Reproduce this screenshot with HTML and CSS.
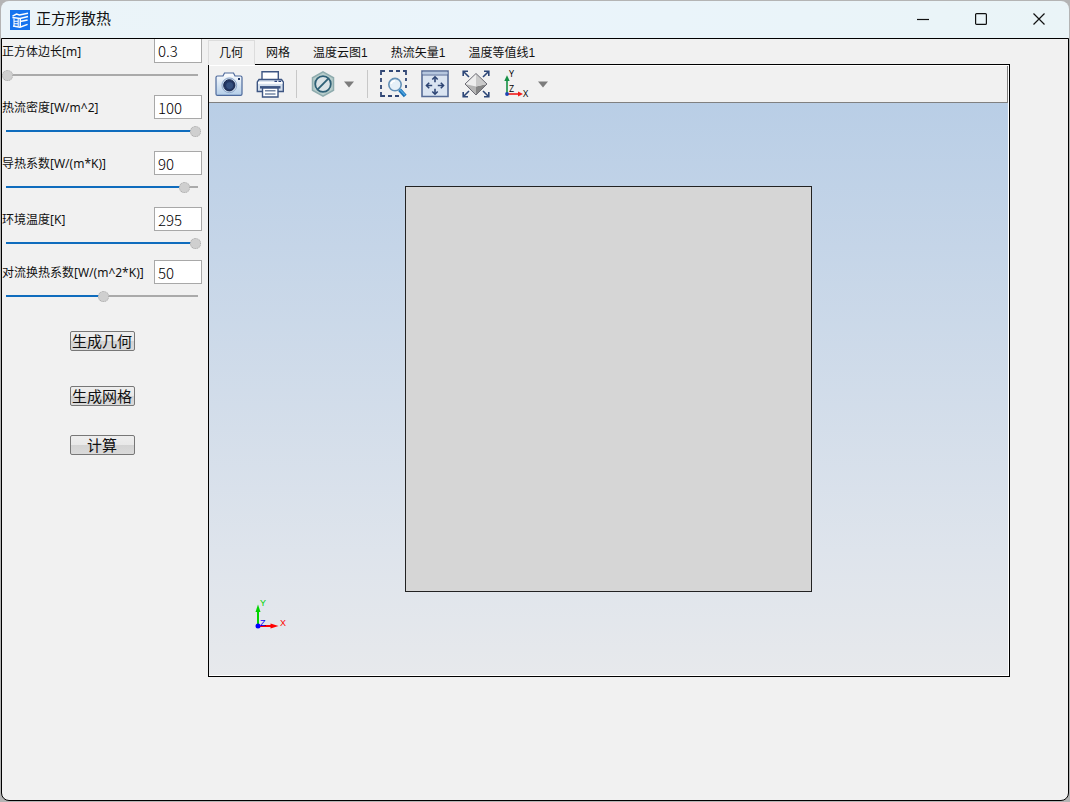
FILE: index.html
```html
<!DOCTYPE html>
<html lang="zh-CN">
<head>
<meta charset="utf-8">
<title>正方形散热</title>
<link rel="stylesheet" href="styles.css">
</head>
<body>
<div class="window">
  <header class="titlebar">
    <svg class="app-icon" viewBox="0 0 20 20" aria-hidden="true">
      <rect width="20" height="20" fill="#1673ee"/>
      <g fill="none" stroke="#fff" stroke-width="1.5">
        <path d="M2.5 6.2L6.5 4L9.5 5L18 3.2"/>
        <path d="M2.4 7.6L10 8.4L18 6.6"/>
        <path d="M10 11.6L17.6 10"/>
        <path d="M3 16L10 17.2L17.6 14.4"/>
        <path d="M4 8.5V16M8.2 8.5V16.6" stroke-width="1.1"/>
        <path d="M4 11.2H8M4 13.8H8" stroke-width="1.1"/>
      </g>
      <path d="M9.6 8.4H11V17L9.6 17.2Z" fill="#fff"/>
    </svg>
    <h1 class="title">正方形散热</h1>
    <div class="window-controls">
      <button class="window-button" type="button" aria-label="最小化"><svg viewBox="0 0 12 12"><path d="M0 6.5H12"/></svg></button>
      <button class="window-button" type="button" aria-label="最大化"><svg viewBox="0 0 12 12"><rect x=".6" y=".6" width="10.8" height="10.8" rx="1"/></svg></button>
      <button class="window-button" type="button" aria-label="关闭"><svg viewBox="0 0 12 12"><path d="M.5 .5L11.5 11.5M11.5 .5L.5 11.5"/></svg></button>
    </div>
  </header>

  <div class="content">
    <form class="sidebar">
      <div class="field field-first">
        <label class="field-label" for="side">正方体边长[m]</label>
        <input class="field-input" id="side" type="text" value="0.3">
        <input class="slider" type="range" aria-label="正方体边长" value="0" style="--fill:0%">
      </div>
      <div class="field">
        <label class="field-label" for="flux">热流密度[W/m^2]</label>
        <input class="field-input" id="flux" type="text" value="100">
        <input class="slider" type="range" aria-label="热流密度" value="100" style="--fill:100%">
      </div>
      <div class="field">
        <label class="field-label" for="conduct">导热系数[W/(m*K)]</label>
        <input class="field-input" id="conduct" type="text" value="90">
        <input class="slider" type="range" aria-label="导热系数" value="94" style="--fill:94%">
      </div>
      <div class="field field-compact">
        <label class="field-label" for="ambient">环境温度[K]</label>
        <input class="field-input" id="ambient" type="text" value="295">
        <input class="slider" type="range" aria-label="环境温度" value="100" style="--fill:100%">
      </div>
      <div class="field">
        <label class="field-label" for="convect">对流换热系数[W/(m^2*K)]</label>
        <input class="field-input" id="convect" type="text" value="50">
        <input class="slider" type="range" aria-label="对流换热系数" value="51" style="--fill:51%">
      </div>
      <div class="actions">
        <button class="action" type="button">生成几何</button>
        <button class="action action-mesh" type="button">生成网格</button>
        <button class="action" type="button">计算</button>
      </div>
    </form>

    <main class="viewer">
      <div class="tabs" role="tablist">
        <button class="tab tab-active" type="button" role="tab" aria-selected="true">几何</button>
        <button class="tab" type="button" role="tab">网格</button>
        <button class="tab" type="button" role="tab">温度云图1</button>
        <button class="tab" type="button" role="tab">热流矢量1</button>
        <button class="tab" type="button" role="tab">温度等值线1</button>
        <span class="tab-rest"></span>
      </div>
      <section class="panel">
        <div class="toolbar">
          <button class="tool" type="button" aria-label="截图">
            <svg viewBox="0 0 28 28">
              <defs><linearGradient id="cam" x2="0" y2="1"><stop stop-color="#fff"/><stop offset="1" stop-color="#b3cde8"/></linearGradient></defs>
              <path d="M1 7.5Q1 6 2.5 6H8L9.5 3H18.5L20 6H25.5Q27 6 27 7.5V24Q27 25.3 25.5 25.3H2.5Q1 25.3 1 24Z" fill="url(#cam)" stroke="#4e6a9c" stroke-width="1.2"/>
              <circle cx="14.3" cy="15.3" r="7.4" fill="#c8d8ea" stroke="#8fa8cb"/>
              <circle cx="14.3" cy="15.3" r="5.6" fill="#243763" stroke="#17264c"/>
              <circle cx="14.6" cy="15.6" r="3.4" fill="#35507f"/>
              <path d="M23 9H25" stroke="#223967" stroke-width="2"/>
            </svg>
          </button>
          <button class="tool" type="button" aria-label="打印">
            <svg viewBox="0 0 28 28" stroke="#3e5683" stroke-width="1.4">
              <path d="M6 11V1.8H22.3V11" fill="#fff"/>
              <path d="M3 9.5H25.5L27.3 12V21.5H1.3V12Z" fill="#d4dfec"/>
              <path d="M2 12.8H26.5" stroke="#fff" stroke-width="2"/>
              <path d="M18.5 11.3H21M22.5 11.3H25" stroke="#2b427b" stroke-width="1.2"/>
              <path d="M4 17.3H24.5" stroke-width="2.5"/>
              <path d="M6.5 18H22V27H6.5Z" fill="#fff"/>
              <path d="M9 20.8H19.5M9 24H19.5" stroke="#7688a5"/>
            </svg>
          </button>
          <span class="separator"></span>
          <button class="tool tool-drop" type="button" aria-label="剖切">
            <svg viewBox="0 0 28 28">
              <path d="M14 1.8L24.5 7.8V20.2L14 26.2L3.5 20.2V7.8Z" fill="#b7cdcb" stroke="#8facae" stroke-width="1.5"/>
              <path d="M14 4.5L22 9V19L14 23.5L6 19V9Z" fill="#c7d9d8"/>
              <circle cx="14" cy="14" r="7.8" fill="#dbe3e6" stroke="#2e6076" stroke-width="1.8"/>
              <path d="M8.7 19.3L19.3 8.7" stroke="#2e6076" stroke-width="1.9"/>
            </svg>
            <svg class="caret" viewBox="0 0 12 7"><path d="M1 .5H11L6 6.5Z" fill="#7c7c7c"/></svg>
          </button>
          <span class="separator"></span>
          <button class="tool" type="button" aria-label="框选缩放">
            <svg viewBox="0 0 28 28" fill="none">
              <path d="M1 5V1H5M9 1H13M16 1H20M23 1H26V5M26 8V11M26 15V18M1 8V12M1 15V19M1 22V26H5M8 26H12M15 26H19" stroke="#314775" stroke-width="1.8"/>
              <circle cx="15" cy="14.6" r="6.2" fill="#e5f0f8" stroke="#6491b7" stroke-width="1.6"/>
              <path d="M11.2 14Q11.5 11 15 10.7" stroke="#fff" stroke-width="1.6"/>
              <path d="M19.6 19.8L25.2 26" stroke="#1971b7" stroke-width="3.8"/>
              <path d="M19.6 19.2L25 25" stroke="#51a6df" stroke-width="1.4"/>
            </svg>
          </button>
          <button class="tool" type="button" aria-label="适应窗口">
            <svg viewBox="0 0 28 28" fill="none" stroke="#2d4473" stroke-width="1.6">
              <path d="M1 1H27V26.5H1Z" fill="#dae4f1" stroke="#566b96"/>
              <path d="M1.5 3.2H26.5" stroke="#b6c7df" stroke-width="2.5"/>
              <path d="M1 5H27" stroke="#566b96" stroke-width="1"/>
              <path d="M14 12.3V7M14 18.7V24M11.2 15.5H6M16.8 15.5H22"/>
              <path d="M11.3 9.5L14 6.8L16.7 9.5M11.3 21.5L14 24.2L16.7 21.5M8.2 12.8L5.5 15.5L8.2 18.2M19.8 12.8L22.5 15.5L19.8 18.2"/>
            </svg>
          </button>
          <button class="tool" type="button" aria-label="等轴测">
            <svg viewBox="0 0 28 28" fill="none">
              <path d="M14 3.5L25 14L14 16.5L3 14Z" fill="#eee"/>
              <path d="M3 14L14 16.5V25Z" fill="#b5b5b5"/>
              <path d="M25 14L14 16.5V25Z" fill="#858585"/>
              <path d="M14 3.5V16.5L25 14Z" fill="#cacaca"/>
              <path d="M14 3.5L25 14L14 25L3 14Z" stroke="#6c6c74"/>
              <path d="M1.2 6V1.2H6M1.2 1.2L7 7M22 1.2H26.8V6M26.8 1.2L21 7M1.2 22V26.8H6M1.2 26.8L7 21M22 26.8H26.8V22M26.8 26.8L21 21" stroke="#2d4778" stroke-width="1.6"/>
            </svg>
          </button>
          <button class="tool tool-drop" type="button" aria-label="视图方向">
            <svg class="axes" viewBox="0 0 28 32" font-family="Open Sans, sans-serif" font-size="9">
              <path d="M4 26V10" stroke="#169044" stroke-width="1.6"/><path d="M1.3 13L4 7.3L6.7 13Z" fill="#169044"/>
              <path d="M4 26H17" stroke="#f21d1d" stroke-width="1.6"/><path d="M15 23.5L20 26L15 28.5Z" fill="#f21d1d"/>
              <circle cx="4" cy="26" r="1.9" fill="#1d44b5"/>
              <text x="6" y="9">Y</text><text x="6" y="24">Z</text><text x="20" y="29">X</text>
            </svg>
            <svg class="caret" viewBox="0 0 12 7"><path d="M1 .5H11L6 6.5Z" fill="#7c7c7c"/></svg>
          </button>
        </div>
        <div class="canvas">
          <div class="solid"></div>
          <svg class="triad" viewBox="0 0 36 34" font-family="Liberation Sans, sans-serif" font-size="9">
            <path d="M6 28V12" stroke="#00d400" stroke-width="2"/><path d="M3.5 14L6 6.5L8.5 14Z" fill="#00d400"/>
            <path d="M6 28H21" stroke="#f00" stroke-width="2"/><path d="M18.5 25.5L26.5 28L18.5 30.5Z" fill="#f00"/>
            <circle cx="6" cy="28" r="2.5" fill="#00f"/>
            <text x="8" y="8" fill="#00d400">Y</text><text x="8" y="28" fill="#00f">Z</text><text x="28" y="28" fill="#f00">X</text>
          </svg>
        </div>
      </section>
    </main>
  </div>
</div>
</body>
</html>
```

FILE: styles.css
```css
* {
  box-sizing: border-box;
}

body {
  margin: 0;
  background: #b4b4b4;
  color: #111;
  font-family: "Noto Sans", "Noto Sans CJK SC", sans-serif;
  font-size: 12px;
}

button,
input {
  margin: 0;
  color: inherit;
  font-family: inherit;
}

.window {
  display: flex;
  flex-direction: column;
  min-height: 100vh;
  padding: 1px;
}

.titlebar {
  display: flex;
  align-items: center;
  height: 37px;
  padding: 0 1px 0 9px;
  border-radius: 8px 8px 0 0;
  background: linear-gradient(90deg, #ebf4f8, #eaf4fb 50%, #eaf4f7);
}

.app-icon {
  width: 20px;
  height: 20px;
}

.title {
  flex: 1;
  margin: 0 0 0 6px;
  padding-bottom: 4px;
  font-size: 15px;
  font-weight: 400;
  line-height: 20px;
}

.window-controls {
  display: flex;
}

.window-button {
  display: grid;
  place-items: center;
  width: 58px;
  height: 37px;
  padding: 0 0 2px;
  border: 0;
  background: none;
}

.window-button svg {
  width: 12px;
  height: 12px;
  fill: none;
  stroke: #111;
  stroke-width: 1.2;
}

.content {
  display: flex;
  flex: 1;
  border: 1px solid #000;
  border-radius: 0 0 8px 8px;
  background: #f1f1f1;
}

.sidebar {
  width: 206px;
}

.field {
  display: grid;
  grid-template-columns: 1fr 48px;
  row-gap: 6px;
  padding-right: 6px;
  padding-bottom: 14px;
}

.field-compact {
  padding-bottom: 11px;
}

.field-label {
  align-self: center;
  padding-top: 2px;
  line-height: 16px;
  white-space: nowrap;
}

.field-input {
  width: 48px;
  height: 24px;
  padding: 0 3px;
  border: 1px solid #a8a8a8;
  background: #fff;
  color: #000;
  font-family: "Noto Sans CJK SC", sans-serif;
  font-size: 15px;
  font-weight: 300;
}

.field-first .field-input {
  border-top: 0;
}

.slider {
  grid-column: 1 / -1;
  width: calc(100% - 1px);
  height: 12px;
  appearance: none;
  background: none;
}

.slider::-webkit-slider-runnable-track {
  height: 12px;
  background:
    linear-gradient(90deg, #0f6cbd var(--fill), #aaa var(--fill))
    center / calc(100% - 7px) 2px no-repeat;
}

.slider::-webkit-slider-thumb {
  width: 11px;
  height: 11px;
  margin-top: 1px;
  appearance: none;
  border: 1px dotted #aaa;
  border-radius: 50%;
  background: #cfcfcf;
}

.actions {
  display: flex;
  flex-direction: column;
  align-items: center;
  padding: 15px 6px 0 0;
}

.action {
  width: 65px;
  height: 20px;
  margin-bottom: 35px;
  padding: 0;
  border: 1px solid #777;
  border-radius: 2px;
  background: linear-gradient(#eee, #e8e8e8 50%, #d3d3d3 50%, #dadada);
  font-size: 15px;
  line-height: 18px;
}

.action-mesh {
  margin-bottom: 29px;
}

.viewer {
  display: flex;
  flex: 1;
  flex-direction: column;
  min-width: 0;
  margin: 1px 58px 123px 0;
}

.tabs {
  display: flex;
}

.tab {
  height: 25px;
  padding: 3px 12px 0 11px;
  border: 0;
  border-bottom: 1px solid #000;
  background: none;
  font-family: "Liberation Sans", "Noto Sans CJK SC", sans-serif;
  font-size: 12px;
  line-height: 21px;
}

.tab-active {
  border: 1px solid #dcdcdc;
  border-bottom-color: #f1f1f1;
  padding: 2px 11px 0 10px;
}

.tab-rest {
  flex: 1;
  border-bottom: 1px solid #000;
}

.panel {
  display: flex;
  flex: 1;
  flex-direction: column;
  padding: 1px 1px 1px 0;
  border: 1px solid #000;
  border-top: 0;
  background: #fff;
}

.toolbar {
  display: flex;
  align-items: center;
  height: 37px;
  padding-left: 6px;
  border-right: 1px solid #808080;
  border-bottom: 1px solid #808080;
  background: #f1f1f1;
}

.tool {
  display: flex;
  align-items: center;
  gap: 7px;
  margin-right: 13px;
  padding: 0;
  border: 0;
  background: none;
}

.tool-drop {
  gap: 6px;
}

.tool svg {
  width: 28px;
  height: 28px;
}

.tool .axes {
  height: 32px;
}

.tool .caret {
  width: 12px;
  height: 7px;
}

.separator {
  width: 1px;
  height: 28px;
  margin: 0 12px 0 -1px;
  background: #c8c8c8;
}

.canvas {
  position: relative;
  display: grid;
  flex: 1;
  place-items: center;
  background: linear-gradient(#b9cee6, #dee4ec 78%, #e7e9ec);
}

.solid {
  height: 71%;
  aspect-ratio: 1;
  border: 1px solid #222;
  background: #d6d6d6;
}

.triad {
  position: absolute;
  left: 43px;
  bottom: 43px;
  width: 36px;
  height: 34px;
}
```
